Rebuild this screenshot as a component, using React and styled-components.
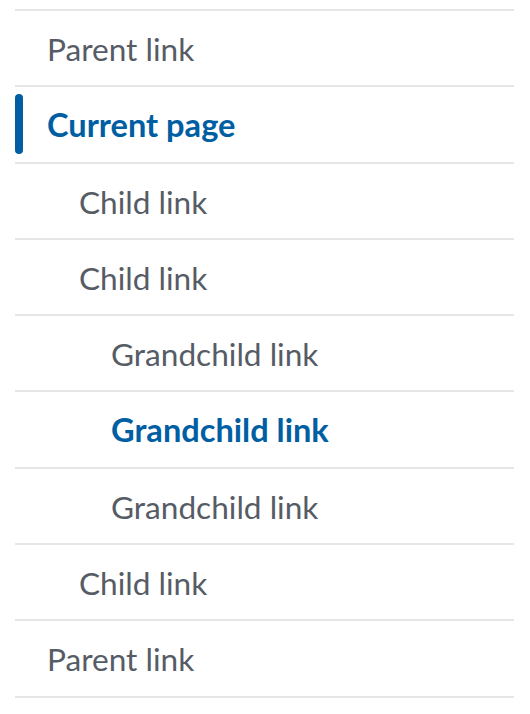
import React from "react";
import styled, { createGlobalStyle } from "styled-components";

const GlobalStyle = createGlobalStyle`
  body {
    margin: 0;
    background: #fff;
    font-family: Lato, "Open Sans", sans-serif;
  }
`;

const items = [
  { label: "Parent link", level: 0 },
  { label: "Current page", level: 0, current: true },
  { label: "Child link", level: 1 },
  { label: "Child link", level: 1 },
  { label: "Grandchild link", level: 2 },
  { label: "Grandchild link", level: 2, current: true },
  { label: "Grandchild link", level: 2 },
  { label: "Child link", level: 1 },
  { label: "Parent link", level: 0 },
];

export default function App() {
  return (
    <>
      <GlobalStyle />
      <Nav>
        <List>
          {items.map((item, i) => (
            <Item key={i}>
              <Link
                href="#"
                $level={item.level}
                $current={item.current}
                $bar={item.current && item.level === 0}
              >
                {item.label}
              </Link>
            </Item>
          ))}
        </List>
      </Nav>
    </>
  );
}

const Nav = styled.nav`
  padding: 9px 16px 0 15px;
  width: 499px;
`;

const List = styled.ul`
  list-style: none;
  margin: 0;
  padding: 0;
  border-bottom: 2px solid #e6e6e6;
`;

const Item = styled.li`
  border-top: 2px solid #e6e6e6;
`;

const Link = styled.a`
  position: relative;
  display: block;
  padding: 17px 16px 15px ${(p) => 32 + p.$level * 32}px;
  font-size: ${(p) => (p.$current ? "32.6px" : "31.6px")};
  line-height: 42.3px;
  color: ${(p) => (p.$current ? "#005ea2" : "#565c65")};
  font-weight: ${(p) => (p.$current ? 700 : 400)};
  text-decoration: none;

  &::after {
    content: "";
    display: ${(p) => (p.$bar ? "block" : "none")};
    position: absolute;
    left: 0;
    top: 7px;
    bottom: 8px;
    width: 8px;
    border-radius: 4px;
    background: #005ea2;
  }
`;
